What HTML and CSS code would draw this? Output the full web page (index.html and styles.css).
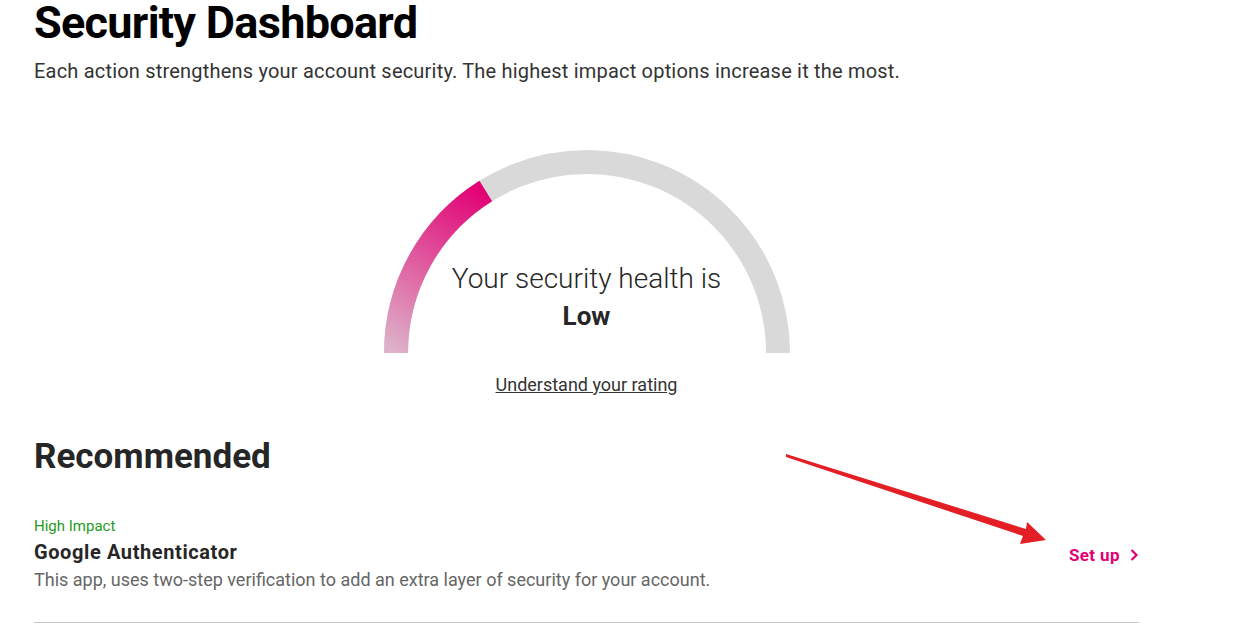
FILE: index.html
```html
<!DOCTYPE html>
<html>
<head>
    <title>Security Dashboard</title>
    <meta charset="UTF-8">
    <link rel="stylesheet" href="styles.css">
</head>
<body>
    <div class="page">
        <h1>Security Dashboard</h1>
        <p class="subtitle">Each action strengthens your account security. The highest impact options increase it the most.</p>

        <div class="gauge">
            <svg class="gauge-ring" width="406" height="203" viewBox="0 0 406 203">
                <defs>
                    <linearGradient id="lowGrad" gradientUnits="userSpaceOnUse" x1="12" y1="203" x2="102" y2="41">
                        <stop offset="0" stop-color="#ddb3c9"/>
                        <stop offset="1" stop-color="#e20074"/>
                    </linearGradient>
                </defs>
                <path d="M 12 203 A 191 191 0 0 1 394 203" fill="none" stroke="#d9d9d9" stroke-width="24"/>
                <path d="M 12 203 A 191 191 0 0 1 101.8 41" fill="none" stroke="url(#lowGrad)" stroke-width="24"/>
            </svg>
            <div class="gauge-text">
                <div class="gauge-label">Your security health is</div>
                <div class="gauge-value">Low</div>
            </div>
        </div>

        <div class="rating-link"><a href="#">Understand your rating</a></div>

        <h2>Recommended</h2>

        <div class="rec-item">
            <div class="rec-info">
                <div class="impact">High Impact</div>
                <div class="rec-title">Google Authenticator</div>
                <div class="rec-desc">This app, uses two-step verification to add an extra layer of security for your account.</div>
            </div>
            <a class="setup" href="#">Set up
                <svg width="10" height="14" viewBox="0 0 10 14"><path d="M2.5 2 L7.5 7 L2.5 12" fill="none" stroke="#e20074" stroke-width="2.2"/></svg>
            </a>
        </div>
    </div>

    <!-- annotation arrow -->
    <svg class="annot-arrow" width="270" height="105" viewBox="780 445 270 105">
        <polygon points="786,454 1026,529 1027,522 1046,540 1020,544 1023,536 786,457" fill="#e31e24"/>
    </svg>
</body>
</html>
```

FILE: styles.css
```css
body {
    margin: 0;
    font-family: Roboto, "Liberation Sans", sans-serif;
    color: #262626;
    background: #fff;
}
.page {
    padding: 0 112px 0 34px;
}
h1 {
    margin: 0;
    font-size: 45px;
    line-height: 46px;
    font-weight: 700;
    letter-spacing: -0.7px;
    color: #000;
}
.subtitle {
    margin: 13px 0 0;
    font-size: 20px;
    line-height: 24px;
    letter-spacing: 0.2px;
    color: #333;
}
.gauge {
    margin-top: 67px;
    display: grid;
    justify-items: center;
}
.gauge-ring,
.gauge-text {
    grid-area: 1 / 1;
}
.gauge-ring {
    display: block;
}
.gauge-text {
    padding-top: 112px;
    text-align: center;
}
.gauge-label {
    font-size: 28px;
    line-height: 34px;
    font-weight: 300;
    color: #262626;
}
.gauge-value {
    margin-top: 3px;
    font-size: 26px;
    line-height: 34px;
    font-weight: 700;
}
.rating-link {
    margin-top: 22px;
    text-align: center;
    font-size: 18px;
    line-height: 20px;
}
.rating-link a {
    color: #333;
}
h2 {
    margin: 44px 0 0;
    font-size: 35px;
    line-height: 35px;
    font-weight: 700;
}
.rec-item {
    margin-top: 44px;
    padding-bottom: 31px;
    border-bottom: 1px solid #c8c8c8;
    display: flex;
    align-items: center;
    justify-content: space-between;
}
.impact {
    font-size: 15px;
    line-height: 16px;
    color: #1e9a1e;
}
.rec-title {
    margin-top: 6px;
    font-size: 20px;
    line-height: 24px;
    font-weight: 700;
    letter-spacing: 0.6px;
}
.rec-desc {
    margin-top: 5px;
    font-size: 18px;
    line-height: 22px;
    color: #666;
}
.setup {
    display: flex;
    align-items: center;
    gap: 9px;
    color: #e20074;
    font-size: 17px;
    font-weight: 700;
    letter-spacing: 0.4px;
    text-decoration: none;
}
.annot-arrow {
    position: absolute;
    left: 780px;
    top: 445px;
}
```
